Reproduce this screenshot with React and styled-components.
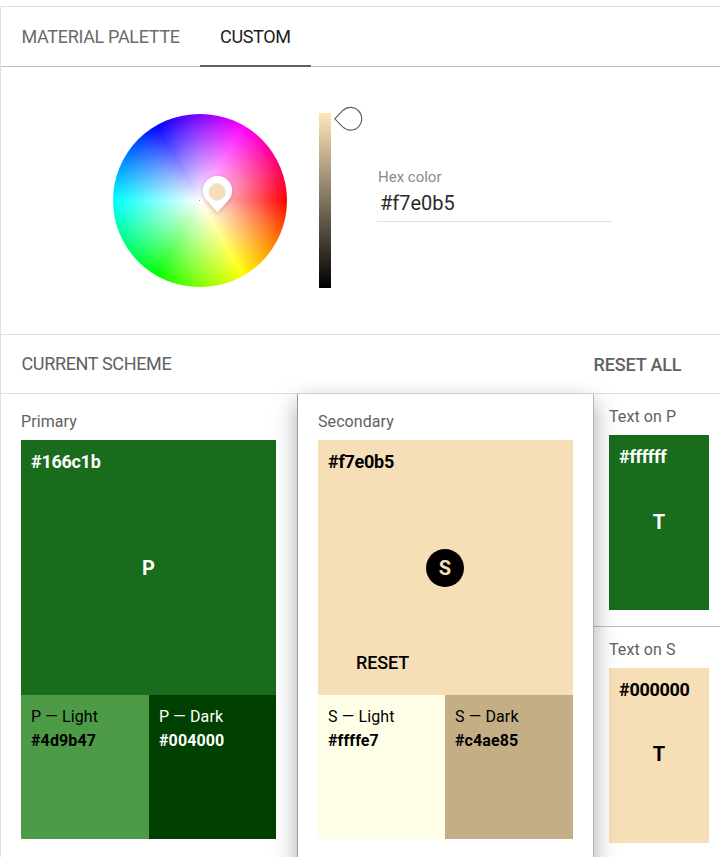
import React from "react";
import styled, { createGlobalStyle } from "styled-components";

const GlobalStyle = createGlobalStyle`
  *, *::before, *::after { box-sizing: border-box; }
  body {
    margin: 0;
    background: #fff;
    color: #000;
    font-family: Roboto, "Liberation Sans", sans-serif;
    overflow: hidden;
  }
`;

const Page = styled.main`
  height: 857px;
  padding-top: 6px;
  overflow: hidden;
`;

const Panel = styled.div`
  height: 851px;
  border-top: 1px solid #e0e0e0;
  border-left: 1px solid #e0e0e0;
`;

const Tabs = styled.nav`
  display: flex;
  height: 60px;
  border-bottom: 1px solid #bdbdbd;
`;

const Tab = styled.button`
  height: 60px;
  padding: 1px 0 0 ${(p) => p.$indent}px;
  border: 0;
  border-bottom: 2px solid ${(p) => (p.$active ? "#616161" : "transparent")};
  background: none;
  color: ${(p) => (p.$active ? "#212121" : "#6b6b6b")};
  font: 400 18px/24px Roboto, sans-serif;
  letter-spacing: -0.32px;
  width: ${(p) => p.$width}px;
  white-space: nowrap;
  text-align: left;
`;

const Picker = styled.section`
  display: flex;
  align-items: flex-start;
  height: 268px;
  padding: 46px 0 0 112px;
  border-bottom: 1px solid #e0e0e0;
`;

const Wheel = styled.div`
  position: relative;
  width: 173.5px;
  height: 173.5px;
  margin: 0.5px 0.5px 0 0;
  border-radius: 50%;
  background:
    radial-gradient(circle closest-side, #fff 0%, rgba(255, 255, 255, 0) 100%),
    conic-gradient(from 90deg, #f00, #ff0, #0f0, #0ff, #00f, #f0f, #f00);
`;

const WheelCenter = styled.span`
  position: absolute;
  left: 86px;
  top: 86.5px;
  width: 1px;
  height: 1px;
  background: #999;
`;

const WheelPin = styled.svg`
  position: absolute;
  left: 84px;
  top: 56.5px;
  overflow: visible;
  filter: drop-shadow(0 1px 2px rgba(0, 0, 0, 0.22));
`;

const ValueSlider = styled.div`
  width: 12px;
  height: 175px;
  margin-left: 32px;
  background: linear-gradient(#ffe7bb, #000);
`;

const SliderHandle = styled.svg`
  margin: -7px 0 0 2px;
`;

const HexField = styled.label`
  display: flex;
  flex-direction: column;
  width: 235px;
  height: 109px;
  margin-left: 14px;
  padding-top: 55px;
  border-bottom: 1px solid #e0e0e0;
`;

const HexLabel = styled.span`
  color: #8a8a8a;
  font-size: 15px;
  line-height: 18px;
  padding-left: 1px;
`;

const HexInput = styled.input`
  width: 100%;
  height: 30px;
  margin-top: 2px;
  padding: 0 3px;
  border: 0;
  outline: 0;
  background: none;
  color: #2b2b2b;
  font: 400 20px/30px Roboto, sans-serif;
`;

const SchemeHeader = styled.header`
  display: flex;
  align-items: center;
  justify-content: space-between;
  height: 59px;
  padding: 0 38.7px 0 20.5px;
  border-bottom: 1px solid #e0e0e0;
`;

const SchemeTitle = styled.h2`
  margin: 0;
  color: #616161;
  font-size: 18px;
  font-weight: 400;
  line-height: 24px;
  letter-spacing: -0.35px;
`;

const ResetAll = styled.button`
  padding: 2px 0 0;
  border: 0;
  background: none;
  color: #616161;
  font: 500 18px/24px Roboto, sans-serif;
  letter-spacing: -0.15px;
`;

const Scheme = styled.section`
  display: grid;
  grid-template-columns: 296px 297px 1fr;
  height: 463px;
`;

const Card = styled.article`
  padding: 17px ${(p) => (p.$raised ? 20 : 21)}px 0 20px;
  background: #fff;
  ${(p) =>
    p.$raised &&
    `
    z-index: 1;
    height: 500px;
    border-left: 1px solid #999;
    border-right: 1px solid #b3b3b3;
    box-shadow: 0 8px 22px rgba(0, 0, 0, 0.34);
  `}
`;

const CardLabel = styled.h3`
  margin: 0;
  height: 29px;
  color: #616161;
  font-size: 16px;
  font-weight: 400;
  line-height: 22px;
  letter-spacing: 0.08px;
`;

const MainSwatch = styled.div`
  display: grid;
  grid-template-rows: 43px 1fr 64px;
  height: 255px;
  background: ${(p) => p.$bg};
  color: ${(p) => p.$fg};
`;

const Hex = styled.strong`
  padding: 10px 10px 0;
  font-size: 18px;
  font-weight: 700;
  line-height: 24px;
  letter-spacing: -0.28px;
`;

const Badge = styled.span`
  place-self: center;
  margin-top: 22px;
  margin-right: ${(p) => (p.$bg ? 1 : 0)}px;
  width: 38px;
  height: 38px;
  border-radius: 50%;
  background: ${(p) => p.$bg};
  color: ${(p) => p.$fg};
  font-size: 20px;
  font-weight: 700;
  line-height: 38px;
  text-align: center;
`;

const Reset = styled.button`
  justify-self: start;
  align-self: start;
  margin-left: 38px;
  margin-top: 20px;
  padding: 0;
  border: 0;
  background: none;
  color: #000;
  font: 500 18px/24px Roboto, sans-serif;
  letter-spacing: -0.15px;
`;

const Variants = styled.div`
  display: grid;
  grid-template-columns: ${(p) => p.$first}px 1fr;
  height: 144px;
`;

const Variant = styled.div`
  padding: 10px;
  background: ${(p) => p.$bg};
  color: ${(p) => p.$fg};
  font-size: 16px;
  line-height: 24px;
  letter-spacing: 0.12px;
`;

const VariantName = styled.div`
  white-space: nowrap;
`;

const VariantHex = styled.div`
  font-weight: 700;
`;

const TextColumn = styled.aside`
  display: grid;
  grid-template-rows: 233px 1fr;
`;

const TextCard = styled.article`
  padding: 12px 0 0 15px;
  border-bottom: 1px solid #bdbdbd;
`;

const TextSwatch = styled.div`
  display: grid;
  grid-template-rows: 43px 1fr ${(p) => p.$foot}px;
  width: 100px;
  height: 175px;
  background: ${(p) => p.$bg};
  color: ${(p) => p.$fg};
`;

const Glyph = styled.span`
  place-self: center;
  font-size: 20px;
  font-weight: 700;
  line-height: 24px;
`;

const schemes = [
  {
    label: "Primary", letter: "P", hex: "#166c1b", bg: "#186c1b", fg: "#fff",
    badgeFg: "#fff", split: 128,
    variants: [
      { name: "P — Light", hex: "#4d9b47", fg: "#000" },
      { name: "P — Dark", hex: "#004000", fg: "#fff" },
    ],
  },
  {
    label: "Secondary", letter: "S", hex: "#f7e0b5", bg: "#f6dfb6", fg: "#000",
    badgeFg: "#f6dfb6", badgeBg: "#000", split: 127, raised: true, reset: true,
    variants: [
      { name: "S — Light", hex: "#ffffe7", fg: "#000" },
      { name: "S — Dark", hex: "#c4ae85", fg: "#000" },
    ],
  },
];

const textColors = [
  { label: "Text on P", hex: "#ffffff", bg: "#186c1b", fg: "#fff", foot: 45 },
  { label: "Text on S", hex: "#000000", bg: "#f6dfb6", fg: "#000", foot: 47 },
];

function SchemeCard({ item }) {
  return (
    <Card $raised={item.raised}>
      <CardLabel>{item.label}</CardLabel>
      <MainSwatch $bg={item.bg} $fg={item.fg}>
        <Hex>{item.hex}</Hex>
        <Badge $bg={item.badgeBg} $fg={item.badgeFg}>{item.letter}</Badge>
        {item.reset && <Reset>RESET</Reset>}
      </MainSwatch>
      <Variants $first={item.split}>
        {item.variants.map((v) => (
          <Variant key={v.name} $bg={v.hex} $fg={v.fg}>
            <VariantName>{v.name}</VariantName>
            <VariantHex>{v.hex}</VariantHex>
          </Variant>
        ))}
      </Variants>
    </Card>
  );
}

export default function App() {
  return (
    <Page>
      <GlobalStyle />
      <Panel>
        <Tabs>
          <Tab $width={199} $indent={20.5}>MATERIAL PALETTE</Tab>
          <Tab $width={111} $indent={20} $active>CUSTOM</Tab>
        </Tabs>
        <Picker>
          <Wheel>
            <WheelCenter />
            <WheelPin width="41" height="48" viewBox="84 57 41 48">
              <path d="M104.5 63a14.6 14.6 0 0 1 14.6 14.6c0 4.200-1.500 7.400-4 10.200L104.500 99.300 93.900 87.800c-2.500-2.800-4-6-4-10.200A14.600 14.600 0 0 1 104.500 63z" fill="#fff" />
              <circle cx="104.200" cy="79" r="8.500" fill="#f6dfb6" stroke="#eeeae4" strokeWidth="0.800" />
            </WheelPin>
          </Wheel>
          <ValueSlider />
          <SliderHandle width="30" height="26" viewBox="0 0 30 26">
            <path d="M1.8 12.8 9.7 4.7C12.1 2.3 14.4 1.4 17.5 1.4a11.2 11.4 0 0 1 0 22.8c-3.1 0-5.4-1-7.8-3.3z" fill="#fff" stroke="#616161" strokeWidth="1.2" />
          </SliderHandle>
          <HexField>
            <HexLabel>Hex color</HexLabel>
            <HexInput defaultValue="#f7e0b5" spellCheck={false} />
          </HexField>
        </Picker>
        <SchemeHeader>
          <SchemeTitle>CURRENT SCHEME</SchemeTitle>
          <ResetAll>RESET ALL</ResetAll>
        </SchemeHeader>
        <Scheme>
          {schemes.map((s) => <SchemeCard key={s.label} item={s} />)}
          <TextColumn>
            {textColors.map((t) => (
              <TextCard key={t.label}>
                <CardLabel>{t.label}</CardLabel>
                <TextSwatch $bg={t.bg} $fg={t.fg} $foot={t.foot}>
                  <Hex>{t.hex}</Hex>
                  <Glyph>T</Glyph>
                </TextSwatch>
              </TextCard>
            ))}
          </TextColumn>
        </Scheme>
      </Panel>
    </Page>
  );
}
